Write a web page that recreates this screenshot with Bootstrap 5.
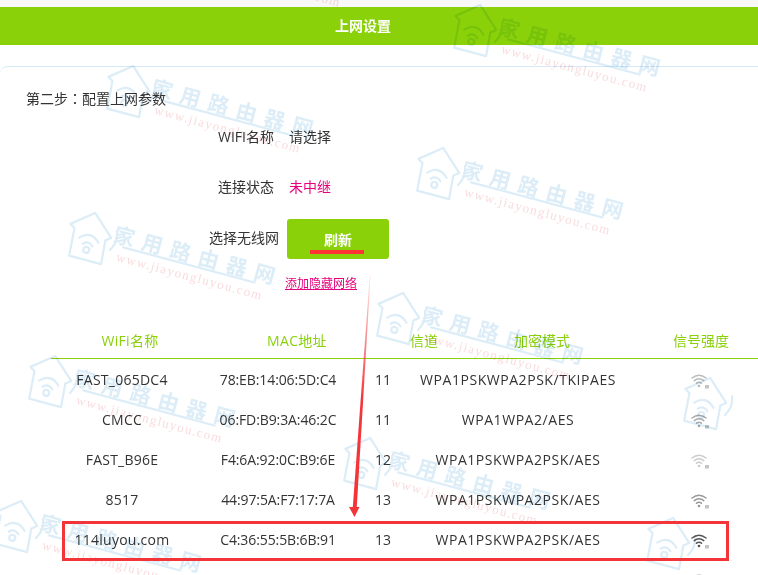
<!doctype html>
<html lang="zh-CN">
<head>
<meta charset="utf-8">
<title>上网设置</title>
<link href="https://cdn.jsdelivr.net/npm/bootstrap@5.3.0/dist/css/bootstrap.min.css" rel="stylesheet">
<style>
html,body{height:100%;overflow:hidden;background:#fff}
body{font-family:"Open Sans","Noto Sans CJK SC",sans-serif;font-size:14px;color:#333;line-height:20px}
.stage{position:relative;width:758px;height:575px;overflow:hidden;background:#fff}
.topstrip{height:7px;background:#f8f8f8}
.banner{height:38px;background:#8ad10a;color:#fff;font-weight:700;padding-right:32px}
.panel{margin-top:21px;border-top:1px solid #d6e9f5;border-top-left-radius:8px;height:520px}
.steptitle{padding:21px 0 0 26px;height:41px}
.fullcolon{font-family:"Noto Sans CJK TC",sans-serif}
.frow{height:40px;margin-top:9px}
.frow2{margin-top:10px}
.frow3{margin-top:12px}
.flabel{width:279px;text-align:right;margin-right:10px;flex:none}
.flabel-s{padding-right:5px}
.flabel-up{margin-bottom:3px}
.pink{color:#e6007e}
.btn.refresh{position:relative;width:102px;height:40px;margin-left:-2px;background:#8ad10a;border:0;border-radius:3px;color:#fff;font-weight:700;font-size:14px;line-height:20px;padding:2px 0 0}
.refresh-mark{position:absolute;left:23px;top:31px;width:54px;height:4px;background:#f33}
.hidelink{display:block;margin:16px 0 0 285px;font-size:12px;line-height:18px;color:#e6007e;text-decoration:underline}
.thead-row{margin:31px 0 0 51px;height:35px;width:730px;border-bottom:1px solid #8ad10a;color:#8ad10a;grid-template-columns:158px 176px 78px 158px 160px}
.thead-row>div{line-height:34px}
.thead-row>div:nth-child(-n+2){letter-spacing:.3px}
.tbody-row{margin-left:51px;height:40px;width:730px;grid-template-columns:142px 170px 40px 230px 134px;line-height:42px}
.tbody-row>div:nth-child(1){letter-spacing:.25px}
.tbody-row>div:nth-child(2){letter-spacing:-.1px}
.tbody-row>div:nth-child(4){letter-spacing:.55px}
.sig{display:block;margin:15px auto 0;width:20px;height:16px}
.s1{color:#bbb}.s2{color:#aaa}.s3{color:#ccc}.s4{color:#999}.s5{color:#555}
.sigbox{fill:#c4c4c4}
.wm{position:absolute;left:0;top:0;width:758px;height:575px;pointer-events:none;mix-blend-mode:multiply}
.wm-cn{font-family:"Noto Sans CJK SC",sans-serif;font-size:21px;font-weight:700;letter-spacing:8px;fill:#dcedf8}
.wm-en{font-family:"Liberation Serif",serif;font-size:13px;fill:#f9dcde}
.redbox{position:absolute;left:62px;top:521px;width:667px;height:40px;border:3px solid #f3353a;pointer-events:none}
.arrow{position:absolute;left:0;top:0;width:758px;height:575px;pointer-events:none}
</style>
</head>
<body>
<div class="stage">
  <div class="topstrip"></div>
  <div class="banner d-flex align-items-center justify-content-center">上网设置</div>
  <div class="panel">
    <div class="steptitle">第二步<span class="fullcolon" lang="zh-TW">：</span>配置上网参数</div>
    <div class="frow d-flex align-items-center">
      <div class="flabel flabel-s">WIFI名称</div><div>请选择</div>
    </div>
    <div class="frow frow2 d-flex align-items-center">
      <div class="flabel flabel-s">连接状态</div><div class="pink">未中继</div>
    </div>
    <div class="frow frow3 d-flex align-items-center">
      <div class="flabel flabel-up">选择无线网</div>
      <button type="button" class="btn refresh">刷新<span class="refresh-mark"></span></button>
    </div>
    <a class="hidelink" href="#">添加隐藏网络</a>
    <div class="thead-row d-grid text-center">
      <div>WiFi名称</div><div>MAC地址</div><div>信道</div><div>加密模式</div><div>信号强度</div>
    </div>
    <div class="tbody-row d-grid text-center">
      <div>FAST_065DC4</div><div>78:EB:14:06:5D:C4</div><div>11</div><div>WPA1PSKWPA2PSK/TKIPAES</div>
      <div class="s1"><svg class="sig" viewBox="0 0 20 16"><use href="#wifi"/></svg></div>
    </div>
    <div class="tbody-row d-grid text-center">
      <div>CMCC</div><div>06:FD:B9:3A:46:2C</div><div>11</div><div>WPA1WPA2/AES</div>
      <div class="s2"><svg class="sig" viewBox="0 0 20 16"><use href="#wifi"/></svg></div>
    </div>
    <div class="tbody-row d-grid text-center">
      <div>FAST_B96E</div><div>F4:6A:92:0C:B9:6E</div><div>12</div><div>WPA1PSKWPA2PSK/AES</div>
      <div class="s3"><svg class="sig" viewBox="0 0 20 16"><use href="#wifi"/></svg></div>
    </div>
    <div class="tbody-row d-grid text-center">
      <div>8517</div><div>44:97:5A:F7:17:7A</div><div>13</div><div>WPA1PSKWPA2PSK/AES</div>
      <div class="s4"><svg class="sig" viewBox="0 0 20 16"><use href="#wifi"/></svg></div>
    </div>
    <div class="tbody-row d-grid text-center">
      <div>114luyou.com</div><div>C4:36:55:5B:6B:91</div><div>13</div><div>WPA1PSKWPA2PSK/AES</div>
      <div class="s5"><svg class="sig" viewBox="0 0 20 16"><use href="#wifi"/></svg></div>
    </div>
    <div class="tbody-row d-grid text-center">
      <div>8517</div><div>44:97:5A:F7:18:B6</div><div>10</div><div>WPA1PSKWPA2PSK/AES</div>
      <div class="s4"><svg class="sig" viewBox="0 0 20 16"><use href="#wifi"/></svg></div>
    </div>
  </div>

  <svg class="wm" viewBox="0 0 758 575" aria-hidden="true">
    <defs>
      <g id="wifi" fill="none" stroke="currentColor" stroke-width="1.5" stroke-linecap="round">
        <path d="M2 4Q9 -1.5 16 4"/>
        <path d="M4.2 6.6Q9 3 13.8 6.6"/>
        <path d="M6.5 9.2Q9 7.4 11.5 9.2"/>
        <circle cx="9" cy="12" r="1.3" fill="currentColor" stroke="none"/>
        <rect class="sigbox" x="15" y="11" width="4" height="3.5" stroke="none"/>
      </g>
      <g id="house" transform="rotate(15)">
        <g fill="none" stroke="#dcedf8" stroke-width="2.2" stroke-linejoin="round" stroke-linecap="round">
          <path d="M-25 -10L-4 -27L18 -7L13 -3L15 21L-18 21L-20 -7Z"/>
          <path d="M-13 1Q-3 -9 7 1"/>
          <path d="M-8 6Q-3 1 2 6"/>
          <circle cx="-3" cy="11" r="3"/>
          <path d="M22 -15Q26 -5 20 5"/>
        </g>
      </g>
      <g id="mark">
        <use href="#house"/>
        <g transform="rotate(15)">
          <path d="M32 -1H168" fill="none" stroke="#dcedf8" stroke-width="2.2" stroke-linecap="round"/>
          <text class="wm-cn" x="20" y="-4">家用路由器网</text>
          <text class="wm-en" x="28" y="14" textLength="150">www.jiayongluyou.com</text>
        </g>
      </g>
    </defs>
    <use href="#mark" transform="translate(170,-53)"/>
    <use href="#mark" transform="translate(477,32)"/>
    <use href="#mark" transform="translate(130,93)"/>
    <use href="#mark" transform="translate(440,175)"/>
    <use href="#mark" transform="translate(92,240)"/>
    <use href="#mark" transform="translate(400,320)"/>
    <use href="#mark" transform="translate(52,383)"/>
    <use href="#house" transform="translate(707,405)"/>
    <use href="#mark" transform="translate(367,465)"/>
    <use href="#mark" transform="translate(18,528)"/>
    <use href="#house" transform="translate(670,545)"/>
  </svg>

  <div class="redbox"></div>
  <svg class="arrow" viewBox="0 0 758 575" aria-hidden="true">
    <defs>
      <linearGradient id="fade" x1="0" y1="275" x2="0" y2="400" gradientUnits="userSpaceOnUse">
        <stop offset="0" stop-color="#f3353a" stop-opacity=".1"/>
        <stop offset="1" stop-color="#f3353a"/>
      </linearGradient>
    </defs>
    <polygon points="369.8,275 370.6,275 356.6,510 352.6,510" fill="url(#fade)"/>
    <polygon points="349,507 359.5,507 354.5,517" fill="#f3353a"/>
  </svg>
</div>
<script src="https://cdn.jsdelivr.net/npm/bootstrap@5.3.0/dist/js/bootstrap.bundle.min.js"></script>
</body>
</html>
